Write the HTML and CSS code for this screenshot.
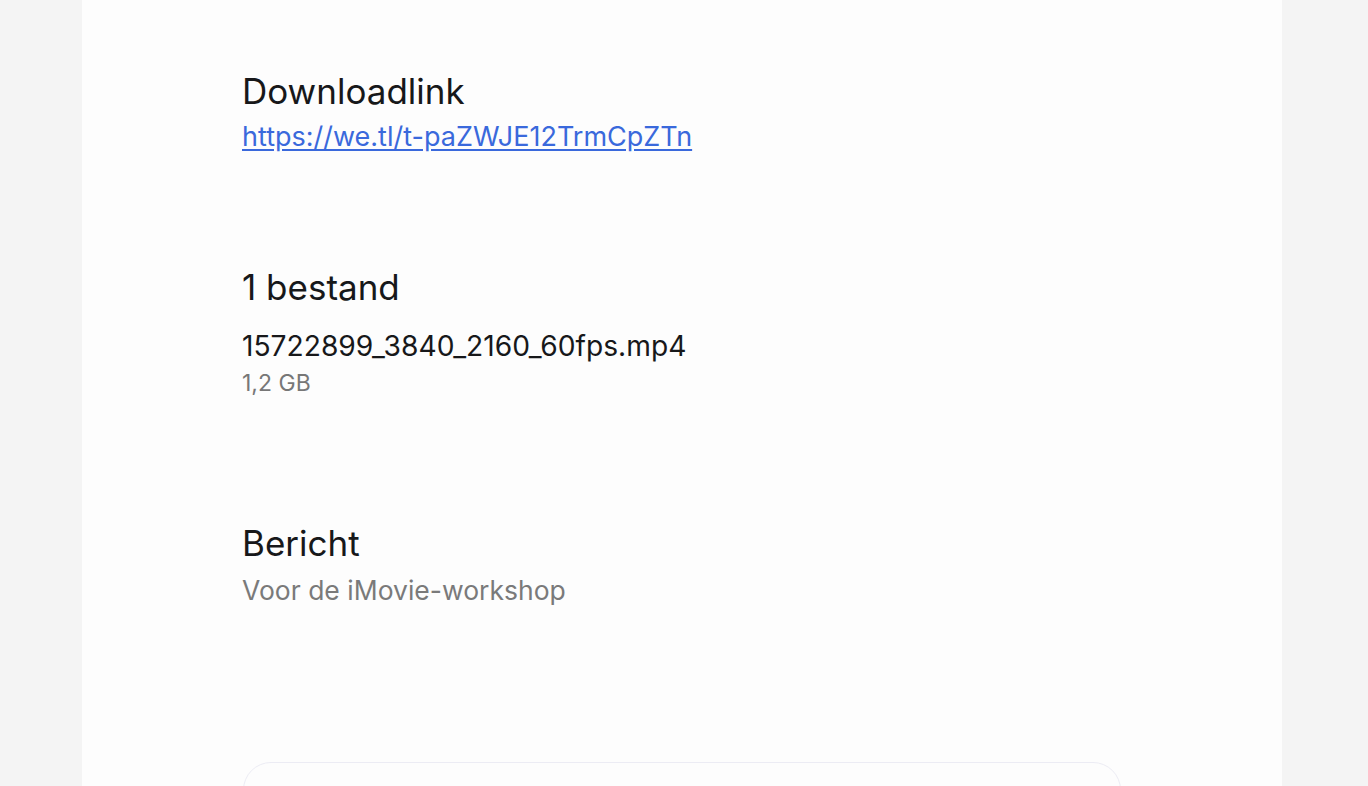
FILE: index.html
```html
<!DOCTYPE html>
<html lang="nl">
<head>
  <meta charset="UTF-8" />
  <meta name="viewport" content="width=device-width, initial-scale=1.0" />
  <title>Downloadlink</title>
  <link rel="stylesheet" href="styles.css">
</head>
<body>

  <div class="mail">
    <div class="block">
      <h2>Downloadlink</h2>
      <a class="link" href="#">https://we.tl/t-paZWJE12TrmCpZTn</a>
    </div>

    <div class="block files">
      <h2>1 bestand</h2>
      <div class="file-name">15722899_3840_2160_60fps.mp4</div>
      <div class="file-size">1,2 GB</div>
    </div>

    <div class="block message">
      <h2>Bericht</h2>
      <p>Voor de iMovie-workshop</p>
    </div>

    <div class="button-box"></div>
  </div>

</body>
</html>
```

FILE: styles.css
```css
body {
  font-family: Inter, "Liberation Sans", sans-serif;
  margin: 0;
  padding: 0;
  background-color: #f4f4f4;
  color: #17181a;
  height: 786px;
  overflow: hidden;
}

.mail {
  width: 1200px;
  margin-left: 82px;
  background-color: #fdfdfd;
  padding: 70px 160px 0 160px;
  box-sizing: border-box;
  height: 786px;
  overflow: hidden;
}

.block h2 {
  font-size: 35px;
  font-weight: 400;
  margin: 0;
  line-height: 42px;
}

.link {
  display: inline-block;
  color: #3a69dc;
  font-size: 27px;
  line-height: 32px;
  margin-top: 9px;
  text-underline-offset: 3px;
}

.files {
  margin-top: 113px;
}

.file-name {
  font-size: 28.2px;
  line-height: 34px;
  margin-top: 21px;
}

.file-size {
  font-size: 23px;
  line-height: 28px;
  color: #777;
  margin-top: 6px;
}

.message {
  margin-top: 125px;
}

.message p {
  font-size: 26.5px;
  line-height: 32px;
  color: #7a7a7a;
  margin: 10px 0 0 0;
}

/* bottom box, only its top edge is in view */
.button-box {
  margin-top: 156px;
  margin-left: 1px;
  width: 876px;
  height: 60px;
  border: 1.5px solid #ececf4;
  border-radius: 28px;
}
```
